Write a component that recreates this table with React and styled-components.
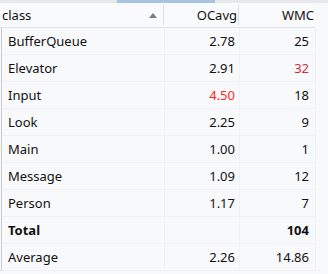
import React from "react";
import styled, { createGlobalStyle } from "styled-components";

const GlobalStyle = createGlobalStyle`
  html, body {
    margin: 0;
    padding: 0;
    background: #fafbfc;
  }
  body {
    font-family: "Noto Sans", "Open Sans", "Liberation Sans", sans-serif;
    font-size: 13px;
    color: #111;
  }
`;

const Panel = styled.div`
  width: 328px;
  height: 274px;
  overflow: hidden;
  background: #f8f9fb;
`;

const TopStrip = styled.div`
  display: flex;
  height: 3px;
  background: #e6e8eb;
`;

const StripActive = styled.div`
  margin-left: 117px;
  width: 98px;
  background: #a9c3e2;
`;

const Grid = styled.div`
  display: grid;
  grid-template-columns: 164px 75px 76px;
  width: 315px;
`;

const HeaderRow = styled(Grid)`
  height: 24px;
  border-bottom: 1px solid #e1e3e6;
  background: #f9fafb;
`;

const HeadCell = styled.div`
  display: flex;
  align-items: center;
  justify-content: ${(p) => (p.$right ? "flex-end" : "space-between")};
  padding: ${(p) => (p.$right ? "0 1px 0 0" : "0 6px 0 2px")};
  border-right: ${(p) => (p.$last ? "none" : "1px solid #dcdee1")};
  margin: 2px 0;
  line-height: 20px;
  white-space: nowrap;
`;

const SortArrow = styled.span`
  width: 0;
  height: 0;
  border-left: 4px solid transparent;
  border-right: 4px solid transparent;
  border-bottom: 5px solid #7a7c80;
`;

const Body = styled.div`
  border-left: 1px solid #c9cbce;
  margin-left: 1px;
`;

const Row = styled.div`
  display: grid;
  grid-template-columns: 163px 75px 76px;
  width: 314px;
  height: 27px;
  border-bottom: 1px solid #f0f1f3;
  box-sizing: border-box;
`;

const Cell = styled.div`
  display: flex;
  align-items: center;
  justify-content: ${(p) => (p.$right ? "flex-end" : "flex-start")};
  padding: ${(p) => (p.$right ? `0 ${p.$pr}px 0 0` : "0 0 0 6px")};
  border-right: 1px solid #f0f1f3;
  font-weight: ${(p) => (p.$bold ? 700 : 400)};
  color: ${(p) => p.$color || "#111"};
  white-space: nowrap;
`;

const rows = [
  { name: "BufferQueue", oc: "2.78", wmc: "25" },
  { name: "Elevator", oc: "2.91", wmc: "32", wmcColor: "#d42a45" },
  { name: "Input", oc: "4.50", wmc: "18", ocColor: "#ff2424" },
  { name: "Look", oc: "2.25", wmc: "9" },
  { name: "Main", oc: "1.00", wmc: "1" },
  { name: "Message", oc: "1.09", wmc: "12" },
  { name: "Person", oc: "1.17", wmc: "7" },
  { name: "Total", oc: "", wmc: "104", bold: true },
  { name: "Average", oc: "2.26", wmc: "14.86" },
];

export default function App() {
  return (
    <Panel>
      <GlobalStyle />
      <TopStrip>
        <StripActive />
      </TopStrip>
      <HeaderRow>
        <HeadCell>
          class
          <SortArrow />
        </HeadCell>
        <HeadCell $right>OCavg</HeadCell>
        <HeadCell $right $last>WMC</HeadCell>
      </HeaderRow>
      <Body>
        {rows.map((r) => (
          <Row key={r.name}>
            <Cell $bold={r.bold}>{r.name}</Cell>
            <Cell $right $pr={4} $bold={r.bold} $color={r.ocColor}>
              {r.oc}
            </Cell>
            <Cell $right $pr={6} $bold={r.bold} $color={r.wmcColor}>
              {r.wmc}
            </Cell>
          </Row>
        ))}
      </Body>
    </Panel>
  );
}
